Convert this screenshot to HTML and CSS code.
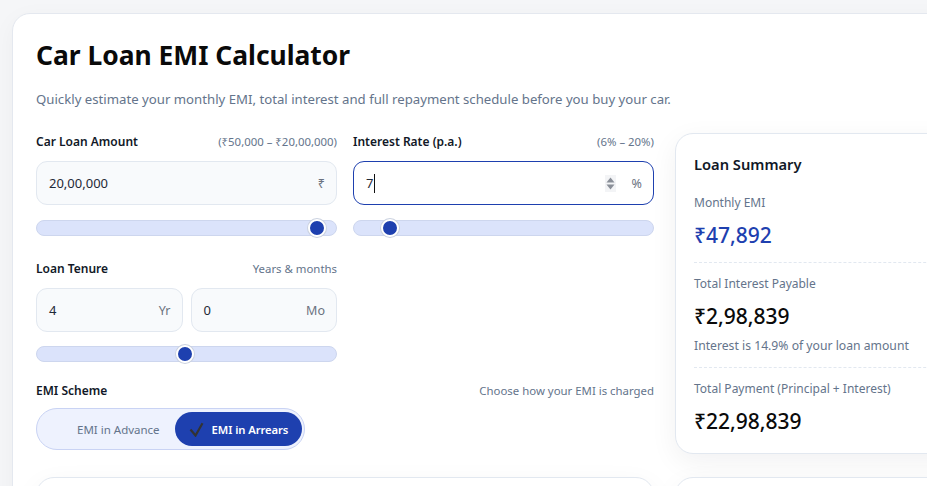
FILE: index.html
```html
<!DOCTYPE html>
<html lang="en">
<head>
<meta charset="utf-8">
<title>Car Loan EMI Calculator</title>
<link rel="stylesheet" href="styles.css">
</head>
<body>
<div class="page">
  <main class="card">
    <h1 class="title">Car Loan EMI Calculator</h1>
    <p class="subtitle">Quickly estimate your monthly EMI, total interest and full repayment schedule before you buy your car.</p>

    <div class="layout">
      <section class="form">
        <div class="field">
          <div class="field-head"><span class="label">Car Loan Amount</span><span class="hint">(₹50,000 – ₹20,00,000)</span></div>
          <div class="input"><span class="value">20,00,000</span><span class="suffix">₹</span></div>
          <div class="range"><span class="thumb" style="left: 93.5%"></span></div>
        </div>

        <div class="field">
          <div class="field-head"><span class="label">Interest Rate (p.a.)</span><span class="hint">(6% – 20%)</span></div>
          <div class="input focused"><span class="value">7<span class="caret"></span></span>
            <span class="tail">
              <svg class="spin" width="11" height="17" viewBox="0 0 11 17"><path d="M5.5 2.5 L9.5 7.5 H1.5 Z" fill="#8a8f98"/><path d="M1.5 9.5 H9.5 L5.5 14.5 Z" fill="#8a8f98"/></svg>
              <span class="suffix">%</span>
            </span>
          </div>
          <div class="range"><span class="thumb" style="left: 12.2%"></span></div>
        </div>

        <div class="field tenure">
          <div class="field-head"><span class="label">Loan Tenure</span><span class="hint">Years &amp; months</span></div>
          <div class="pair">
            <div class="input"><span class="value">4</span><span class="suffix">Yr</span></div>
            <div class="input"><span class="value">0</span><span class="suffix">Mo</span></div>
          </div>
          <div class="range"><span class="thumb" style="left: 49.6%"></span></div>
        </div>

        <div class="field scheme">
          <div class="field-head"><span class="label">EMI Scheme</span><span class="hint">Choose how your EMI is charged</span></div>
          <div class="toggle">
            <button class="opt"><svg class="check hidden" width="15" height="15" viewBox="0 0 15 15"><path d="M1.5 7.5 L6.5 13.5 L13.5 1.2" fill="none" stroke="#333" stroke-width="2.2"/></svg>EMI in Advance</button>
            <button class="opt active"><svg class="check" width="15" height="15" viewBox="0 0 15 15"><path d="M1.5 7.5 L6.5 13.5 L13.5 1.2" fill="none" stroke="#333" stroke-width="2.2"/></svg>EMI in Arrears</button>
          </div>
        </div>
      </section>

      <aside class="summary">
        <h2 class="sum-title">Loan Summary</h2>
        <div class="stat">
          <div class="stat-label">Monthly EMI</div>
          <div class="stat-value blue">₹47,892</div>
        </div>
        <div class="stat">
          <div class="stat-label">Total Interest Payable</div>
          <div class="stat-value">₹2,98,839</div>
          <div class="stat-note">Interest is 14.9% of your loan amount</div>
        </div>
        <div class="stat last">
          <div class="stat-label">Total Payment (Principal + Interest)</div>
          <div class="stat-value">₹22,98,839</div>
        </div>
      </aside>

      <section class="panel"></section>
      <section class="panel side"></section>
    </div>
  </main>
</div>
</body>
</html>
```

FILE: styles.css
```css
* { box-sizing: border-box; }
html, body { overflow: hidden; }
body {
  margin: 0;
  background: #f5f6f8;
  font-family: "Noto Sans", "Open Sans", sans-serif;
  color: #111827;
}
.page { padding: 13px 0 0 12px; }
.card {
  width: 1012px;
  background: #fff;
  border: 1px solid #e4e8ef;
  border-radius: 18px;
  padding: 23px 23px 24px;
  box-shadow: 0 6px 24px rgba(15, 23, 42, 0.04);
}
.title {
  margin: 0;
  font-size: 26.4px;
  line-height: 36px;
  font-weight: 700;
  color: #0a0a0a;
}
.subtitle {
  margin: 16px 0 0;
  font-size: 13.2px;
  line-height: 20px;
  color: #64748b;
}
.layout {
  margin-top: 24px;
  display: grid;
  grid-template-columns: 618px 320px;
  gap: 23px 21px;
  align-items: start;
}
.form {
  display: grid;
  grid-template-columns: 301px 301px;
  column-gap: 16px;
  row-gap: 24px;
}
.field-head {
  display: flex;
  justify-content: space-between;
  align-items: baseline;
  line-height: 18px;
}
.label { font-size: 12px; font-weight: 600; color: #111827; }
.hint { font-size: 11.4px; color: #64748b; }
.input {
  margin-top: 10px;
  height: 44px;
  display: flex;
  align-items: center;
  justify-content: space-between;
  padding: 0 11px 0 12px;
  background: #f8fafc;
  border: 1px solid #e2e8f0;
  border-radius: 11px;
  font-size: 13px;
}
.input.focused {
  background: #fff;
  border: 1.5px solid #1e40af;
}
.value { color: #1f2937; display: flex; align-items: center; }
.caret { display: inline-block; width: 1px; height: 19px; background: #111; margin-left: 1px; }
.suffix { font-size: 12.5px; color: #6b7280; }
.tail { display: flex; align-items: center; gap: 16px; }
.spin { background: #f3f4f6; }
.pair { display: grid; grid-template-columns: 1fr 1fr; gap: 8px; }
.range {
  position: relative;
  margin-top: 15px;
  height: 16px;
  background: #dbe3fb;
  border: 1px solid #cdd6ee;
  border-radius: 8px;
}
.tenure .range { margin-top: 14px; }
.thumb {
  position: absolute;
  top: 50%;
  width: 18px;
  height: 18px;
  margin: -9px 0 0 -9px;
  background: #1e40af;
  border: 2px solid #fff;
  border-radius: 50%;
  box-shadow: 0 0 0 1px #cbd2e0;
}
.scheme { grid-column: 1 / 3; margin-top: -4px; }
.toggle {
  margin-top: 8px;
  display: inline-flex;
  align-items: center;
  gap: 1px;
  height: 42px;
  padding: 0 2px 0 3px;
  background: #eef2fe;
  border: 1px solid #c9d3f4;
  border-radius: 21px;
}
.opt {
  display: flex;
  align-items: center;
  gap: 8px;
  height: 34px;
  padding: 0 14px;
  border: 0;
  border-radius: 17px;
  background: transparent;
  font-family: inherit;
  font-size: 11.5px;
  color: #64748b;
}
.opt.active { background: #1e40af; color: #fff; font-weight: 600; font-size: 11.3px; letter-spacing: -0.1px; }
.check.hidden { visibility: hidden; }

.summary {
  background: #fff;
  border: 1px solid #e2e8f0;
  border-radius: 18px;
  padding: 19px 18px 17px;
  box-shadow: 0 8px 28px rgba(15, 23, 42, 0.06);
}
.sum-title { margin: 0 0 19px; font-size: 14.7px; line-height: 22px; font-weight: 600; color: #111827; }
.stat { padding: 12px 0 12px; border-bottom: 1px dashed #e2e8f0; }
.stat:first-of-type { padding-top: 0; }
.stat.last { border-bottom: 0; padding-bottom: 0; }
.stat-label { font-size: 12px; line-height: 18px; color: #64748b; }
.stat-value { margin-top: 8px; font-size: 21px; line-height: 30px; font-weight: 500; color: #0a0a0a; }
.stat-value.blue { color: #1e40af; }
.stat-note { margin-top: 6px; font-size: 12.2px; line-height: 18px; color: #64748b; }

.panel {
  height: 120px;
  background: #fff;
  border: 1px solid #e2e8f0;
  border-radius: 18px;
  box-shadow: 0 8px 28px rgba(15, 23, 42, 0.05);
}
```
